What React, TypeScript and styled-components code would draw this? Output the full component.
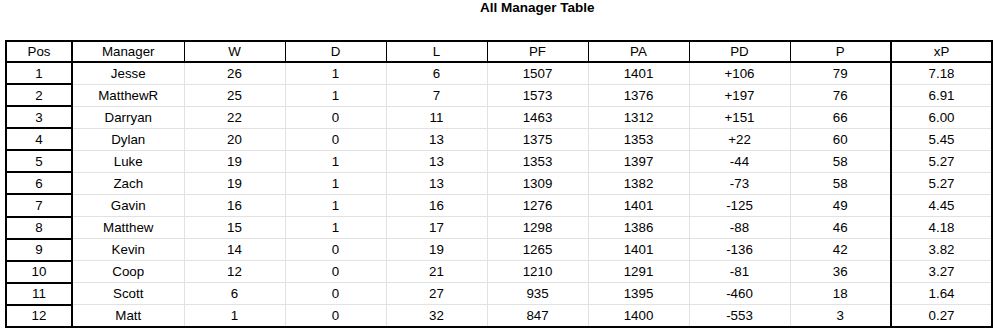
import React from "react";
import styled, { createGlobalStyle } from "styled-components";

const Global = createGlobalStyle`
  html, body { margin: 0; padding: 0; background: #fff; }
  body { font-family: Arial, "Liberation Sans", sans-serif; color: #000; }
`;

const Page = styled.div`
  width: 1000px;
  height: 330px;
  display: flex;
  flex-direction: column;
  padding: 0 0 0 5px;
  box-sizing: border-box;
`;

const Title = styled.div`
  font-family: Arial, "Liberation Sans", sans-serif;
  font-weight: bold;
  font-size: 13.5px;
  line-height: 15px;
  height: 15px;
  margin: 0 0 25px 475px;
  color: #000;
`;

const Table = styled.table`
  border-collapse: collapse;
  table-layout: fixed;
  width: 986px;
  border: 2px solid #000;
  font-family: Arial, "Liberation Sans", sans-serif;
  font-size: 13.33px;
  line-height: 15px;
`;

const HeadCell = styled.th<{ $thickRight?: boolean }>`
  font-weight: normal;
  text-align: center;
  padding: 0;
  height: 19px;
  border-bottom: 2px solid #000;
  border-right: ${(p) => (p.$thickRight ? "2px solid #000" : "1px solid #000")};
`;

const Cell = styled.td<{ $thickRight?: boolean; $thickBottom?: boolean }>`
  text-align: center;
  padding: 0;
  height: 20.09px;
  border-bottom: ${(p) => (p.$thickBottom ? "2px solid #000" : "1px solid #e2e2e2")};
  border-right: ${(p) => (p.$thickRight ? "2px solid #000" : "1px solid #e2e2e2")};
`;

const headers = ["Pos", "Manager", "W", "D", "L", "PF", "PA", "PD", "P", "xP"];
const widths = [66, 112, 101, 101, 101, 101, 101, 101, 101, 101];

const rows: (string | number)[][] = [
  [1, "Jesse", 26, 1, 6, 1507, 1401, "+106", 79, "7.18"],
  [2, "MatthewR", 25, 1, 7, 1573, 1376, "+197", 76, "6.91"],
  [3, "Darryan", 22, 0, 11, 1463, 1312, "+151", 66, "6.00"],
  [4, "Dylan", 20, 0, 13, 1375, 1353, "+22", 60, "5.45"],
  [5, "Luke", 19, 1, 13, 1353, 1397, "-44", 58, "5.27"],
  [6, "Zach", 19, 1, 13, 1309, 1382, "-73", 58, "5.27"],
  [7, "Gavin", 16, 1, 16, 1276, 1401, "-125", 49, "4.45"],
  [8, "Matthew", 15, 1, 17, 1298, 1386, "-88", 46, "4.18"],
  [9, "Kevin", 14, 0, 19, 1265, 1401, "-136", 42, "3.82"],
  [10, "Coop", 12, 0, 21, 1210, 1291, "-81", 36, "3.27"],
  [11, "Scott", 6, 0, 27, 935, 1395, "-460", 18, "1.64"],
  [12, "Matt", 1, 0, 32, 847, 1400, "-553", 3, "0.27"],
];

const thickAfter = (i: number) => i === 0 || i === 8 || i === 9;

export default function App() {
  return (
    <Page>
      <Global />
      <Title>All Manager Table</Title>
      <Table>
        <colgroup>
          {widths.map((w, i) => (
            <col key={i} style={{ width: w }} />
          ))}
        </colgroup>
        <thead>
          <tr>
            {headers.map((h, i) => (
              <HeadCell key={h} $thickRight={thickAfter(i)}>
                {h}
              </HeadCell>
            ))}
          </tr>
        </thead>
        <tbody>
          {rows.map((r, ri) => (
            <tr key={ri}>
              {r.map((v, ci) => (
                <Cell
                  key={ci}
                  $thickRight={thickAfter(ci)}
                  $thickBottom={ci === 0 || ri === rows.length - 1}
                >
                  {v}
                </Cell>
              ))}
            </tr>
          ))}
        </tbody>
      </Table>
    </Page>
  );
}
